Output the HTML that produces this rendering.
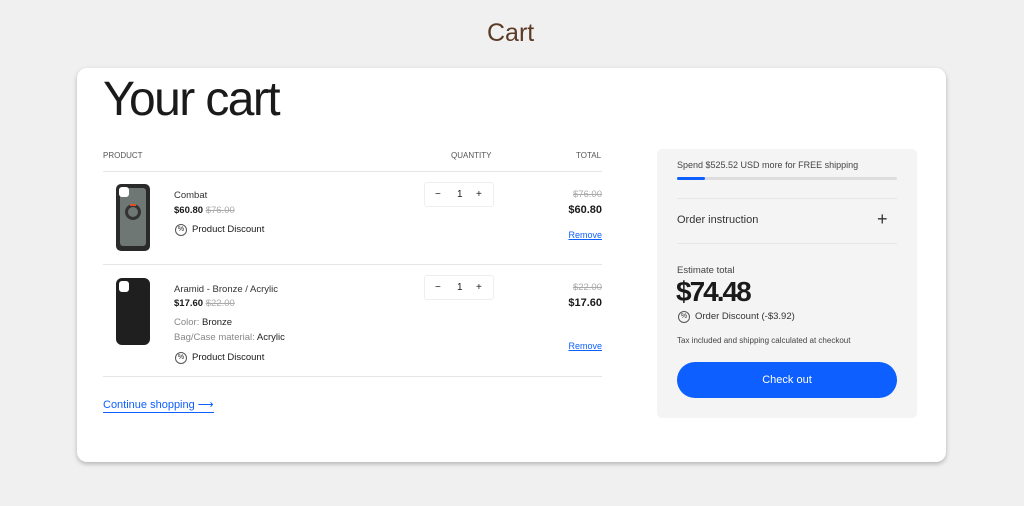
<!DOCTYPE html>
<html><head><meta charset="utf-8"><style>
*{margin:0;padding:0;box-sizing:border-box}
body{width:1024px;height:506px;background:#f0f0f0;font-family:"Liberation Sans",sans-serif;color:#1a1a1a;position:relative;overflow:hidden}
.a{position:absolute;white-space:nowrap}
.card{position:absolute;left:77px;top:68px;width:869px;height:394px;background:#fff;border-radius:10px;box-shadow:0 2px 5px rgba(0,0,0,.25)}
.hr{position:absolute;height:1px;background:#e6e6e6}
.s{font-size:9.5px}
.strike{text-decoration:line-through;color:#aaa}
.rm{color:#0d5fff;text-decoration:underline;font-size:9px}
.qty{position:absolute;width:70px;height:25px;border:1px solid #eee;border-radius:3px;font-size:10px}
.qty span{position:absolute;top:6px}
.fx{display:flex;align-items:center;line-height:12px}
.ic{flex:none;width:12px;height:12px;border:1px solid #555;border-radius:50%;margin-right:5px;font-size:7px;line-height:10px;text-align:center}
</style></head><body>
<div class="a" style="left:487px;top:19px;font-size:25px;color:#5b3a26">Cart</div>
<div class="card"></div>
<div class="a" style="left:103px;top:72px;font-size:48px;letter-spacing:-1.6px;color:#1a1a1a">Your cart</div>
<div class="a s" style="left:103px;top:151px;font-size:8px;color:#555">PRODUCT</div>
<div class="a s" style="left:451px;top:151px;font-size:8px;color:#555">QUANTITY</div>
<div class="a s" style="left:576px;top:151px;font-size:8px;color:#555">TOTAL</div>
<div class="hr" style="left:103px;top:171px;width:499px"></div>
<div class="hr" style="left:103px;top:264px;width:499px"></div>
<div class="hr" style="left:103px;top:376px;width:499px"></div>
<!-- item 1 -->
<div class="a" style="left:116px;top:184px;width:34px;height:67px;background:#2a2a2a;border-radius:5px"><div style="position:absolute;left:4px;top:4px;width:26px;height:58px;background:#6f7774;border-radius:3px"></div><div style="position:absolute;left:3px;top:3px;width:10px;height:10px;background:#fff;border-radius:3px"></div><div style="position:absolute;left:9px;top:20px;width:16px;height:16px;border:3px solid #333;border-radius:50%"></div><div style="position:absolute;left:14px;top:20px;width:6px;height:2px;background:#e05020"></div></div>
<div class="a s" style="left:174px;top:190px;color:#333">Combat</div>
<div class="a s" style="left:174px;top:205px;font-weight:bold">$60.80 <span class="strike" style="font-weight:normal">$76.00</span></div>
<div class="a s fx" style="left:175px;top:224px"><span class="ic">%</span>Product Discount</div>
<div class="qty" style="left:424px;top:182px"><span style="left:10px">−</span><span style="left:32px">1</span><span style="left:51px">+</span></div>
<div class="a s strike" style="right:422px;top:189px">$76.00</div>
<div class="a" style="right:422px;top:204px;font-size:11px;font-weight:bold">$60.80</div>
<div class="a rm" style="right:422px;top:230px">Remove</div>
<!-- item 2 -->
<div class="a" style="left:116px;top:278px;width:34px;height:67px;background:#1f1f1f;border-radius:6px"><div style="position:absolute;left:3px;top:3px;width:10px;height:11px;background:#fff;border-radius:3px"></div></div>
<div class="a s" style="left:174px;top:284px;color:#333">Aramid - Bronze / Acrylic</div>
<div class="a s" style="left:174px;top:298px;font-weight:bold">$17.60 <span class="strike" style="font-weight:normal">$22.00</span></div>
<div class="a s" style="left:174px;top:317px;color:#888">Color: <span style="color:#222">Bronze</span></div>
<div class="a s" style="left:174px;top:332px;color:#888">Bag/Case material: <span style="color:#222">Acrylic</span></div>
<div class="a s fx" style="left:175px;top:352px"><span class="ic">%</span>Product Discount</div>
<div class="qty" style="left:424px;top:275px"><span style="left:10px">−</span><span style="left:32px">1</span><span style="left:51px">+</span></div>
<div class="a s strike" style="right:422px;top:282px">$22.00</div>
<div class="a" style="right:422px;top:297px;font-size:11px;font-weight:bold">$17.60</div>
<div class="a rm" style="right:422px;top:341px">Remove</div>
<div class="a" style="left:103px;top:398px;font-size:11px;color:#0d5fff;border-bottom:1px solid #0d5fff;padding-bottom:1px">Continue shopping ⟶</div>
<!-- summary -->
<div class="a" style="left:657px;top:149px;width:260px;height:269px;background:#f4f4f4;border-radius:5px"></div>
<div class="a s" style="left:677px;top:160px;font-size:9px;color:#444">Spend $525.52 USD more for FREE shipping</div>
<div class="a" style="left:677px;top:177px;width:220px;height:3px;background:#ddd;border-radius:2px"><div style="width:28px;height:3px;background:#0d5fff;border-radius:2px"></div></div>
<div class="hr" style="left:677px;top:198px;width:220px"></div>
<div class="a" style="left:677px;top:214px;font-size:11px;color:#333">Order instruction</div>
<div class="a" style="left:877px;top:209px;font-size:18px;color:#333;font-weight:300">+</div>
<div class="hr" style="left:677px;top:243px;width:220px"></div>
<div class="a s" style="left:677px;top:265px;color:#444">Estimate total</div>
<div class="a" style="left:676px;top:276px;font-size:28px;letter-spacing:-2px;font-weight:bold">$74.48</div>
<div class="a s fx" style="left:678px;top:311px;color:#333"><span class="ic">%</span>Order Discount (-$3.92)</div>
<div class="a" style="left:677px;top:336px;font-size:8px;color:#444">Tax included and shipping calculated at checkout</div>
<div class="a" style="left:677px;top:362px;width:220px;height:36px;background:#0d5fff;border-radius:18px;color:#fff;font-size:11px;text-align:center;line-height:36px">Check out</div>
</body></html>
